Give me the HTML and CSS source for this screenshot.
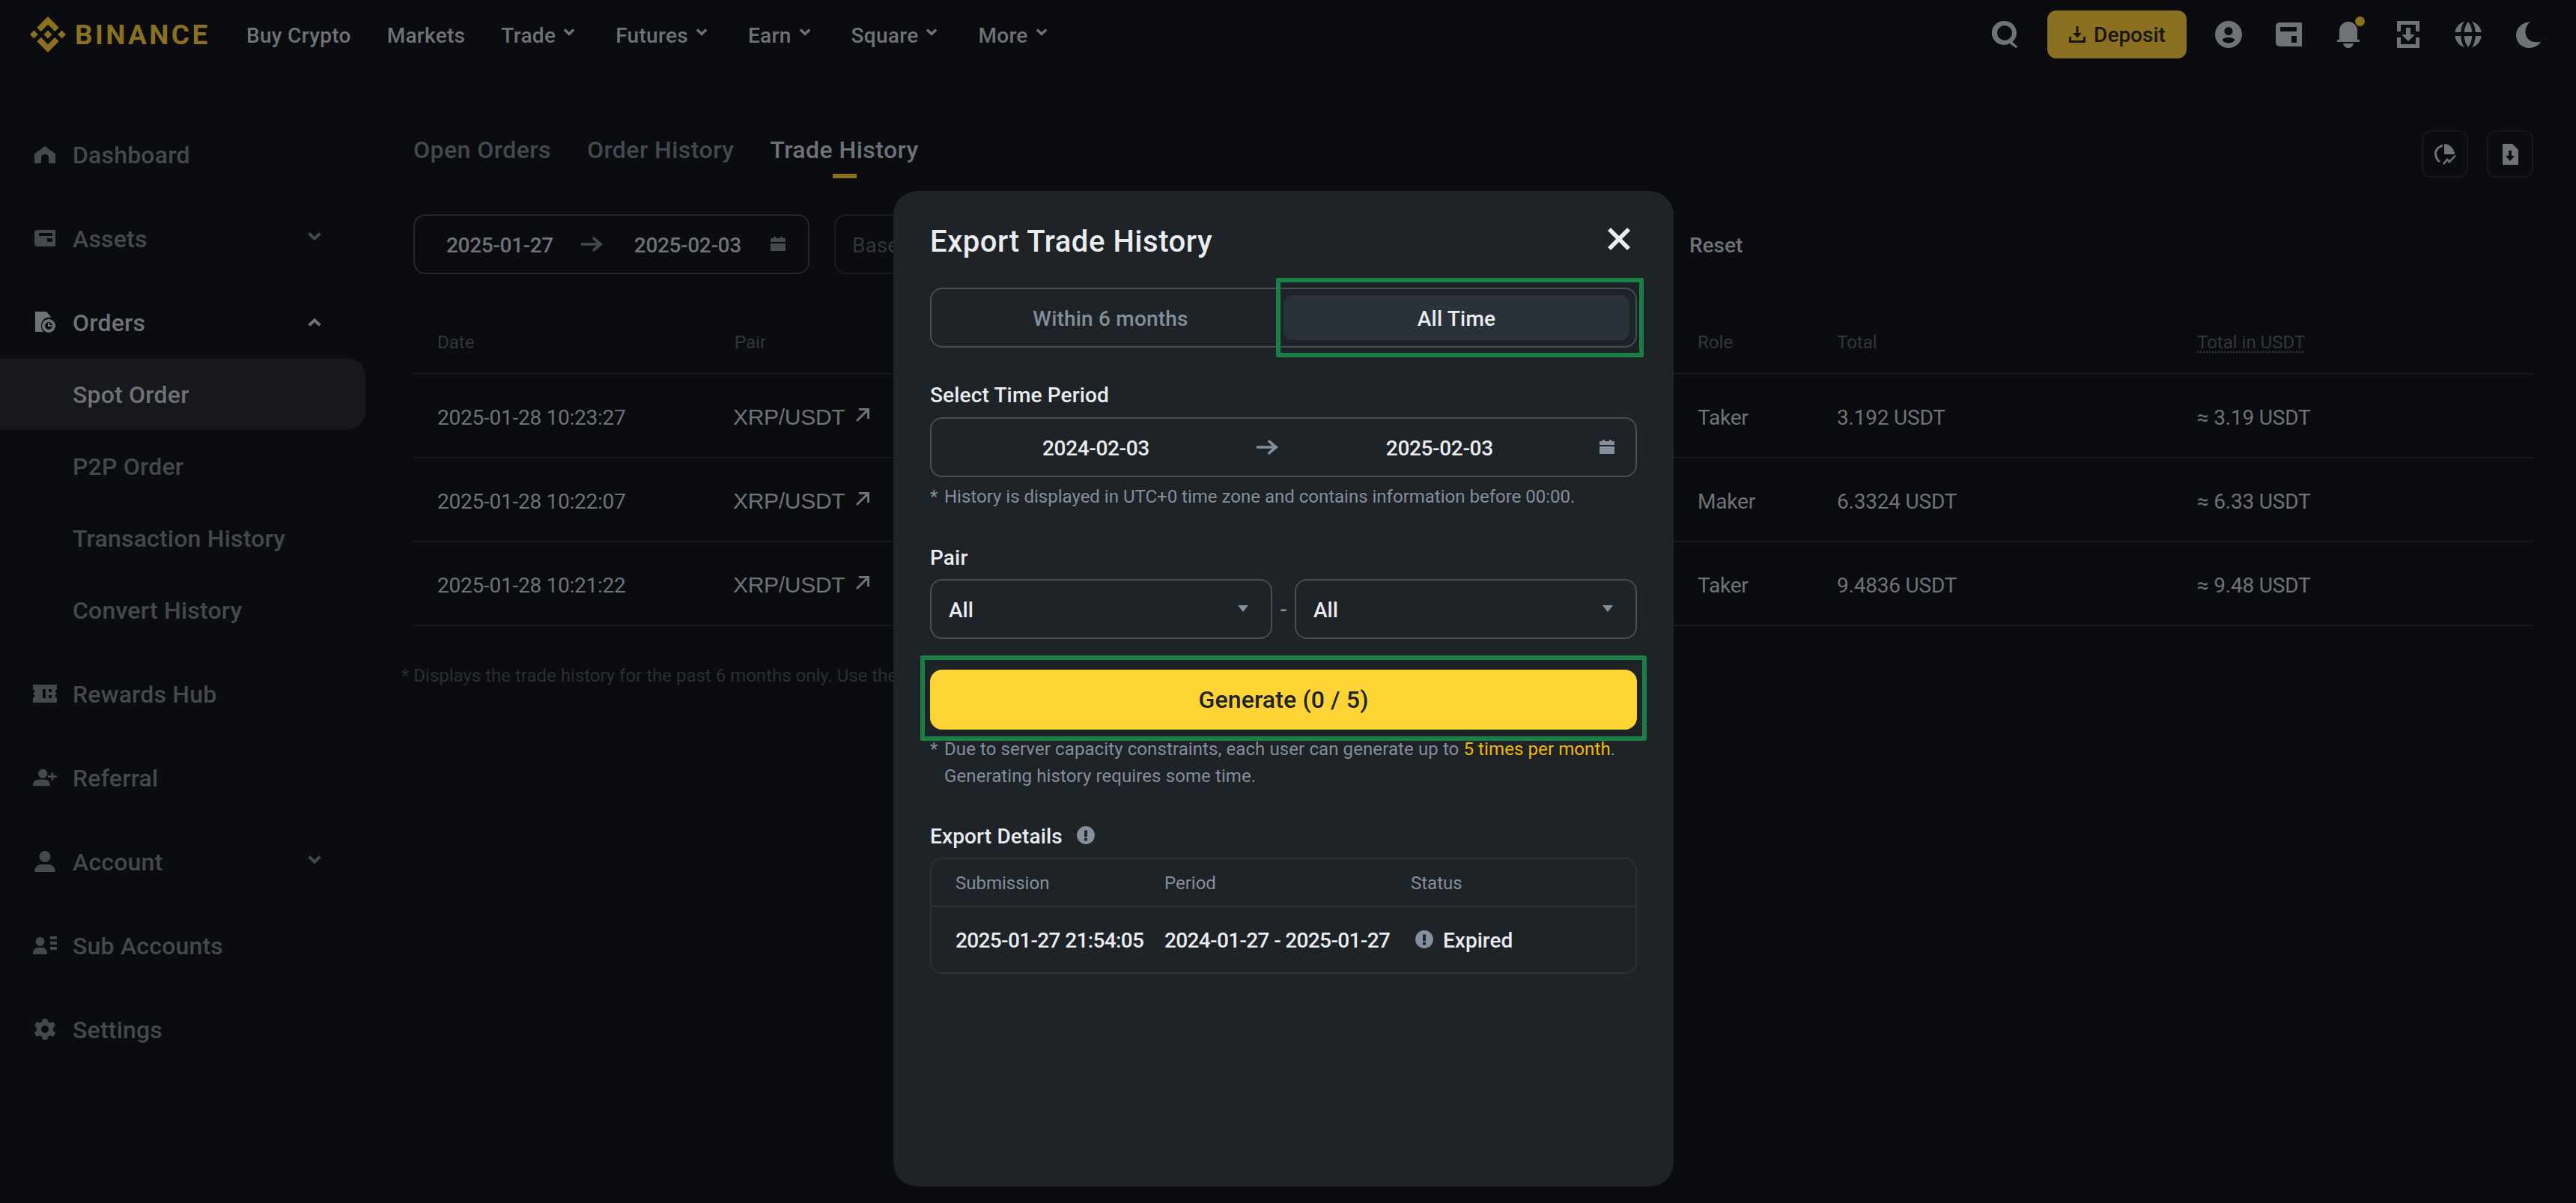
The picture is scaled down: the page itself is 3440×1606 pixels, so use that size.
FILE: index.html
```html
<!DOCTYPE html>
<html lang="en">
<head>
    <meta charset="UTF-8">
    <title>Export Trade History</title>
    <link rel="stylesheet" href="styles.css">
</head>
<body>
    <svg class="defs" width="0" height="0">
        <symbol id="chev" viewBox="0 0 24 24"><path d="M4 8.500 12 16l8-7.500-2.600-2.700L12 10.800 6.600 5.800z"/></symbol>
        <symbol id="cal" viewBox="0 0 24 24"><path d="M6 2h3v2h6V2h3v2h4v5H2V4h4zM2 11h20v10H2z"/></symbol>
        <symbol id="arrow" viewBox="0 0 32 24"><path d="M18 2l-2.400 2.300 6.200 6H1v3.400h20.800l-6.200 6L18 22l12-10z"/></symbol>
        <symbol id="info" viewBox="0 0 24 24"><path fill-rule="evenodd" d="M12 1a11 11 0 1 1 0 22 11 11 0 0 1 0-22zm-1.800 5v8h3.600V6zm0 9.500V19h3.600v-3.500z"/></symbol>
        <symbol id="ext" viewBox="0 0 20 20"><path d="M5 1h14v14h-3V6.200L3 19l-2-2L13.800 4H5z"/></symbol>
    </svg>

    <!-- Barra superior -->
    <header class="topbar">
        <a class="logo">
            <svg class="logo-mark" viewBox="0 0 24 24"><path d="M16.624 13.920l2.718 2.715-7.353 7.353-7.353-7.352 2.718-2.716 4.635 4.659 4.636-4.659zm4.637-4.637L24 12l-2.715 2.716L18.568 12l2.693-2.717zm-9.272.001l2.716 2.692-2.716 2.717L9.272 12l2.717-2.716zm-9.272-.001L5.409 12l-2.691 2.692L0 12l2.717-2.717zM11.989.011l7.353 7.329-2.718 2.716-4.635-4.636-4.636 4.660-2.717-2.716z"/></svg>
            <span class="logo-text">BINANCE</span>
        </a>
        <nav class="topnav">
            <a>Buy Crypto</a>
            <a>Markets</a>
            <a>Trade<svg class="nav-chev"><use href="#chev"/></svg></a>
            <a>Futures<svg class="nav-chev"><use href="#chev"/></svg></a>
            <a>Earn<svg class="nav-chev"><use href="#chev"/></svg></a>
            <a>Square<svg class="nav-chev"><use href="#chev"/></svg></a>
            <a>More<svg class="nav-chev"><use href="#chev"/></svg></a>
        </nav>
        <div class="top-actions">
            <svg class="top-icon search-icon" viewBox="0 0 36 36"><path fill-rule="evenodd" d="M17 0a16 16 0 0 1 10.500 28l7 6.500-2.500 1.500-8.500-6A16 16 0 1 1 17 0zm0 6a10 10 0 1 0 0 20 10 10 0 0 0 0-20z"/></svg>
            <button class="deposit-btn">
                <svg viewBox="0 0 24 24"><path d="M10.500 1h3v9h4.500l-6 6.500L6 10h4.500zM1 15h3v5h16v-5h3v8H1z"/></svg>
                Deposit
            </button>
            <svg class="top-icon" viewBox="0 0 36 36"><path fill-rule="evenodd" d="M18 0a18 18 0 1 1 0 36 18 18 0 0 1 0-36zm0 8a5.500 5.500 0 1 0 0 11 5.500 5.500 0 0 0 0-11zm0 14c-4.500 0-7.500 1.500-8.500 3.500 2 2.500 5 4 8.500 4s6.500-1.500 8.500-4c-1-2-4-3.500-8.500-3.500z"/></svg>
            <svg class="top-icon" viewBox="0 0 36 36"><path fill-rule="evenodd" d="M6 2h30v32H6a5 5 0 0 1-5-5V7a5 5 0 0 1 5-5zm1 6v6h22V8zm15 12v9h7v-9z"/></svg>
            <span class="bell">
                <svg class="top-icon" viewBox="0 0 36 36"><path d="M18 1c7 0 12 5 12 12v12h3v3H3v-3h3V13C6 6 11 1 18 1zM11 30h14c-1 4-4 6-7 6s-6-2-7-6z"/></svg>
                <i class="bell-dot"></i>
            </span>
            <svg class="top-icon" viewBox="0 0 36 36"><path d="M3 0h30v14h-5V5H8v9H3zM15 9h6v9h6l-9 9-9-9h6zM3 22h5v9h20v-9h5v14H3z"/></svg>
            <svg class="top-icon" viewBox="0 0 36 36"><path fill-rule="evenodd" d="M13.500.6C10 4 8.500 9.500 8.300 15H.2a18 18 0 0 1 13.300-14.400zm9 0A18 18 0 0 1 35.800 15h-8.100C27.500 9.500 26 4 22.500.6zM18 1c3 3.500 5 8.500 5.300 14H12.700C13 9.500 15 4.500 18 1zM.2 20h8.100c.2 5.500 1.700 11.800 5.200 15.400A18 18 0 0 1 .2 20zm12.500 0h10.600c-.3 5.500-2.300 11.500-5.300 15-3-3.500-5-9.500-5.300-15zm15 0h8.100a18 18 0 0 1-13.300 15.400c3.500-3.600 5-9.900 5.200-15.400z"/></svg>
            <svg class="top-icon" viewBox="0 0 36 36"><path d="M21 1C14 7 13 15 16 21c3 6 10 8.500 19 6.500C32 33 26 36 19 36 9 36 2 28 2 19 2 9 10 2 21 1z"/></svg>
        </div>
    </header>

    <div class="page">
        <!-- Menu lateral -->
        <aside class="sidebar">
            <a class="side-item">
                <svg class="side-icon" viewBox="0 0 28 24"><path d="M14 1l14 10.500V24h-9v-8c0-2-2-4-5-4s-5 2-5 4v8H0V11.500z"/></svg>
                Dashboard
            </a>
            <a class="side-item">
                <svg class="side-icon" viewBox="0 0 28 24"><path fill-rule="evenodd" d="M4 1h24v22H4a4 4 0 0 1-4-4V5a4 4 0 0 1 4-4zm2 4v4h18V5zm11 7v5h7v-5z"/></svg>
                Assets
                <svg class="side-chev"><use href="#chev"/></svg>
            </a>
            <a class="side-item side-open">
                <svg class="side-icon" viewBox="0 0 28 28"><path d="M1 0h15l6 7v1c-8-1-13 4-13 11 0 3 1 6 3 8H1zM19 10a9 9 0 1 1 0 18 9 9 0 0 1 0-18zm0 4a5 5 0 1 0 0 10 5 5 0 0 0 0-10zm-1 1h2v3h3v2h-5z"/></svg>
                Orders
                <svg class="side-chev flip"><use href="#chev"/></svg>
            </a>
            <div class="side-sub">
                <a class="sub-item active">Spot Order</a>
                <a class="sub-item">P2P Order</a>
                <a class="sub-item">Transaction History</a>
                <a class="sub-item">Convert History</a>
            </div>
            <a class="side-item">
                <svg class="side-icon wide" viewBox="0 0 32 24"><path d="M0 0h32v6l-3 3 3 3v-3 3l-3 3 3 3v6H0v-6l3-3-3-3 3-3-3-3zm13 6v12h4V6zm8 0v4h4V6zm0 8v4h4v-4z"/></svg>
                Rewards Hub
            </a>
            <a class="side-item">
                <svg class="side-icon wide" viewBox="0 0 34 24"><path d="M14 0a6.500 6.500 0 1 1 0 13 6.500 6.500 0 0 1 0-13zM12 15h4c6 0 8 3 8 9H0c0-6 3-9 8-9zM26 5h3v4h5v3h-5v4h-3v-4h-5V9h5z"/></svg>
                Referral
            </a>
            <a class="side-item">
                <svg class="side-icon" viewBox="0 0 28 28"><path d="M14 0a7.500 7.500 0 1 1 0 15 7.500 7.500 0 0 1 0-15zM10 18h8c6 0 10 4 10 10H0c0-6 4-10 10-10z"/></svg>
                Account
                <svg class="side-chev"><use href="#chev"/></svg>
            </a>
            <a class="side-item">
                <svg class="side-icon wide" viewBox="0 0 32 24"><path d="M9.500 1a6 6 0 1 1 0 12 6 6 0 0 1 0-12zM7 15h5c5 0 7 4 7 9H0c0-5 2-9 7-9zM23 0h9v4h-9zM23 7h9v4h-9zM23 14h9v4h-9z"/></svg>
                Sub Accounts
            </a>
            <a class="side-item">
                <svg class="side-icon wide" viewBox="0 0 30 28"><path fill-rule="evenodd" d="M12 0h6l1 4 3 1.500 4-1.500 3 5-3 3v4l3 3-3 5-4-1.500-3 1.500-1 4h-6l-1-4-3-1.500-4 1.500-3-5 3-3v-4L1 9l3-5 4 1.500L11 4zm3 9a5 5 0 1 0 0 10 5 5 0 0 0 0-10z"/></svg>
                Settings
            </a>
        </aside>

        <!-- Conteúdo principal -->
        <main class="content">
            <div class="tabs-row">
                <div class="tabs">
                    <a class="tab">Open Orders</a>
                    <a class="tab">Order History</a>
                    <a class="tab active">Trade History</a>
                </div>
                <div class="tools">
                    <button class="tool-btn"><svg viewBox="0 0 30 30"><path fill-rule="evenodd" d="M14 1v14h14C28 8 21 1 14 1zM12 2C6 3 1 8 1 14c0 5 2 9 6 12l2-2C6 22 4 18 4 14c0-4 3-8 8-9zM28 16l-7 7-3-3-6 7 2 2 4-5 3 3 9-10z"/></svg></button>
                    <button class="tool-btn"><svg viewBox="0 0 30 30"><path fill-rule="evenodd" d="M5 1h13l8 8v20H5zm8 9v7H9l6 7 6-7h-4v-7z"/></svg></button>
                </div>
            </div>

            <div class="filters">
                <div class="range">
                    <span class="range-date">2025-01-27</span>
                    <svg class="range-arrow"><use href="#arrow"/></svg>
                    <span class="range-date second">2025-02-03</span>
                    <svg class="range-cal"><use href="#cal"/></svg>
                </div>
                <div class="base-input">Base</div>
                <a class="reset">Reset</a>
            </div>

            <div class="trades">
                <div class="trade-row trade-head">
                    <span>Date</span><span>Pair</span><span>Role</span><span>Total</span><span><u>Total in USDT</u></span>
                </div>
                <div class="trade-row">
                    <span class="stamp">2025-01-28 10:23:27</span>
                    <span class="pair">XRP/USDT<svg><use href="#ext"/></svg></span>
                    <span>Taker</span><span>3.192 USDT</span><span>≈ 3.19 USDT</span>
                </div>
                <div class="trade-row">
                    <span class="stamp">2025-01-28 10:22:07</span>
                    <span class="pair">XRP/USDT<svg><use href="#ext"/></svg></span>
                    <span>Maker</span><span>6.3324 USDT</span><span>≈ 6.33 USDT</span>
                </div>
                <div class="trade-row">
                    <span class="stamp">2025-01-28 10:21:22</span>
                    <span class="pair">XRP/USDT<svg><use href="#ext"/></svg></span>
                    <span>Taker</span><span>9.4836 USDT</span><span>≈ 9.48 USDT</span>
                </div>
            </div>
            <p class="foot-note">* Displays the trade history for the past 6 months only. Use the export function for older records.</p>
        </main>
    </div>

    <!-- Modal de exportação -->
    <section class="modal">
        <div class="modal-head">
            <h2>Export Trade History</h2>
            <svg class="close" viewBox="0 0 30 30"><path d="M4 0l11 11L26 0l4 4-11 11 11 11-4 4-11-11L4 30l-4-4 11-11L0 4z"/></svg>
        </div>

        <div class="segment">
            <button class="seg-btn">Within 6 months</button>
            <button class="seg-btn active">All Time</button>
            <i class="mark mark-seg"></i>
        </div>

        <div class="field-label label-period">Select Time Period</div>
        <div class="range range-modal">
            <span class="range-date">2024-02-03</span>
            <svg class="range-arrow"><use href="#arrow"/></svg>
            <span class="range-date second">2025-02-03</span>
            <svg class="range-cal"><use href="#cal"/></svg>
        </div>
        <p class="hint hint-period"><span class="star">*</span><span>History is displayed in UTC+0 time zone and contains information before 00:00.</span></p>

        <div class="field-label label-pair">Pair</div>
        <div class="pair-selects">
            <div class="select">All<i class="caret"></i></div>
            <span class="dash">-</span>
            <div class="select">All<i class="caret"></i></div>
        </div>

        <div class="generate-wrap">
            <button class="generate">Generate (0 / 5)</button>
            <i class="mark mark-gen"></i>
        </div>
        <p class="hint hint-limit"><span class="star">*</span><span>Due to server capacity constraints, each user can generate up to <em>5 times per month</em>.<br>Generating history requires some time.</span></p>

        <div class="field-label label-details">Export Details<svg class="info"><use href="#info"/></svg></div>
        <div class="details">
            <div class="details-row details-head">
                <span>Submission</span><span>Period</span><span>Status</span>
            </div>
            <div class="details-row details-body">
                <span>2025-01-27 21:54:05</span>
                <span>2024-01-27 - 2025-01-27</span>
                <span class="status"><svg class="info"><use href="#info"/></svg>Expired</span>
            </div>
        </div>
    </section>
</body>
</html>
```

FILE: styles.css
```css
* { box-sizing: border-box; }
html, body { margin: 0; padding: 0; }
body {
    width: 3440px;
    height: 1606px;
    overflow: hidden;
    position: relative;
    background: #0a0c10;
    color: #6f7277;
    font-family: Roboto, "Noto Sans", sans-serif;
    font-size: 28px;
}
svg { fill: currentColor; flex: none; }
.defs { position: absolute; }
button { font-family: inherit; border: 0; padding: 0; }
p, h2 { margin: 0; }

/* Barra superior */
.topbar { height: 96px; display: flex; align-items: center; padding: 0 46px 4px 40px; }
.logo { display: flex; align-items: center; gap: 12px; color: #8a7020; width: 289px; }
.logo-mark { width: 48px; height: 48px; }
.logo-text { font-size: 37px; font-weight: 700; letter-spacing: 3.400px; }
.topnav { display: flex; gap: 48px; font-weight: 500; letter-spacing: .3px; }
.topnav a { display: flex; align-items: center; gap: 7px; padding-top: 2px; }
.nav-chev { width: 22px; height: 22px; margin: -6px 3px 0 0; }
.topnav a:last-child .nav-chev { margin-right: 0; }
.top-actions { margin-left: auto; display: flex; align-items: center; gap: 44px; }
.top-icon { width: 36px; height: 36px; display: block; }
.search-icon { margin-right: -6px; }
.deposit-btn {
    width: 186px; height: 64px; margin-right: -6px;
    display: flex; align-items: center; justify-content: center; gap: 10px;
    background: #8a7020; color: #17150f; border-radius: 12px;
    font-size: 28px; font-weight: 500;
}
.deposit-btn svg { width: 24px; height: 24px; }
.bell { position: relative; display: block; }
.bell-dot { position: absolute; right: -4px; top: -6px; width: 13px; height: 13px; border-radius: 50%; background: #8a7020; }

/* Menu lateral */
.page { display: flex; }
.sidebar { width: 488px; flex: none; padding-top: 62px; color: #44484f; font-size: 32px; font-weight: 500; letter-spacing: .2px; }
.side-item { height: 96px; margin-bottom: 16px; display: flex; align-items: center; padding: 2px 55px 0 97px; position: relative; }
.side-open { color: #6f7277; margin-bottom: 0; }
.side-icon { position: absolute; left: 46px; top: 34px; width: 28px; height: 28px; }
.side-icon.wide { left: 44px; width: 32px; }
.side-chev { width: 26px; height: 26px; margin: -4px 0 0 auto; }
.side-chev.flip { transform: rotate(180deg); }
.side-sub { margin-bottom: 16px; }
.sub-item { height: 96px; display: flex; align-items: center; padding: 2px 0 0 97px; }
.sub-item.active { background: #16181c; color: #6f7277; border-radius: 0 24px 24px 0; }

/* Conteúdo principal */
.content { flex: 1; padding: 0 57px 0 64px; }
.tabs-row { display: flex; justify-content: space-between; padding-top: 78px; height: 190px; }
.tabs { display: flex; gap: 48px; font-size: 32px; font-weight: 500; color: #44484f; height: 56px; letter-spacing: .45px; }
.tab { position: relative; line-height: 52px; }
.tab.active { color: #6f7277; }
.tab.active::after { content: ""; position: absolute; left: 50%; bottom: -8px; width: 32px; height: 6px; margin-left: -16px; background: #8a7020; }
.tools { display: flex; gap: 25px; }
.tool-btn { width: 62px; height: 63px; background: none; border: 2px solid #15171b; border-radius: 12px; color: #6f7277; display: flex; align-items: center; justify-content: center; }
.tool-btn svg { width: 30px; height: 30px; }

.filters { display: flex; align-items: center; height: 80px; }
.range { width: 529px; height: 80px; border: 2px solid #25282d; border-radius: 16px; display: flex; align-items: center; padding: 0 28px 0 42px; color: #6f7277; font-weight: 500; }
.range-date { letter-spacing: -.35px; padding-top: 2px; }
.range-arrow { width: 32px; height: 24px; margin-left: 36px; color: #44484f; }
.range-date.second { margin-left: 40px; }
.range-cal { width: 24px; height: 24px; margin-left: auto; color: #44484f; }
.base-input { width: 480px; height: 80px; margin-left: 33px; border: 2px solid #191b20; border-radius: 16px 0 0 16px; display: flex; align-items: center; padding: 2px 0 0 22px; color: #33363c; }
.reset { margin-left: 662px; padding-top: 2px; font-weight: 500; }

.trades { margin-top: 50px; }
.trade-row { height: 112px; display: grid; grid-template-columns: 397px 1286px 186px 481px 1fr; align-items: center; padding: 4px 0 0 32px; border-bottom: 2px solid #16181c; letter-spacing: -.2px; }
.trade-head { height: 84px; padding-top: 0; font-size: 24px; color: #33363c; letter-spacing: 0; }
.trade-head u { text-decoration: underline dotted; text-underline-offset: 4px; }
.stamp { letter-spacing: -.25px; }
.pair { font-family: "Liberation Sans", sans-serif; font-size: 30px; letter-spacing: -.3px; display: flex; align-items: center; gap: 14px; margin-left: -2px; }
.pair svg { width: 20px; height: 20px; margin-top: -6px; }
.foot-note { margin: 52px 0 0 -16px; font-size: 24px; color: #2b2e33; white-space: nowrap; }

/* Modal de exportação */
.modal {
    position: absolute; left: 1193px; top: 255px; width: 1042px; height: 1329px;
    padding: 0 49px;
    background: #1e2328; border-radius: 32px;
    color: #eaecef; font-weight: 500;
}
.modal-head { height: 129px; display: flex; align-items: center; justify-content: space-between; padding-right: 9px; }
.modal-head h2 { font-size: 40px; font-weight: 500; letter-spacing: .55px; padding-top: 6px; }
.close { width: 30px; height: 30px; margin-top: -2px; color: #eaecef; }

.segment { position: relative; height: 80px; border: 2px solid #474d57; border-radius: 16px; display: flex; padding: 8px; }
.seg-btn { flex: 1; background: none; color: #848e9c; font-size: 28px; font-weight: 500; border-radius: 12px; letter-spacing: .2px; padding-top: 2px; }
.seg-btn.active { background: #2b3139; color: #eaecef; }
.mark { position: absolute; border: 6px solid #1a7f45; border-radius: 2px; pointer-events: none; }
.mark-seg { left: 460px; top: -15px; width: 491px; height: 106px; }

.field-label { font-size: 28px; color: #eaecef; letter-spacing: .15px; }
.label-period { margin-top: 46px; line-height: 36px; }
.range-modal { width: 944px; margin-top: 11px; color: #eaecef; padding: 0 26px 0 148px; border-color: #474d57; }
.range-modal .range-arrow { margin-left: 142px; color: #848e9c; }
.range-modal .range-date.second { margin-left: 142px; }
.range-modal .range-cal { color: #848e9c; }

.hint { display: flex; font-size: 24px; line-height: 36px; color: #848e9c; font-weight: 400; }
.star { width: 19px; flex: none; }
.hint em { font-style: normal; color: #f0b90b; }
.hint-period { margin-top: 8px; }
.label-pair { margin-top: 46px; line-height: 36px; }
.pair-selects { display: flex; align-items: center; margin-top: 10px; }
.select { flex: 1; height: 80px; border: 2px solid #474d57; border-radius: 16px; display: flex; align-items: center; justify-content: space-between; padding: 2px 30px 0 23px; }
.dash { width: 30px; text-align: center; color: #848e9c; }
.caret { width: 0; height: 0; border: 7px solid transparent; border-top: 9px solid #848e9c; border-bottom: 0; margin-top: -4px; }

.generate-wrap { position: relative; margin-top: 41px; }
.generate { display: block; width: 100%; height: 80px; border-radius: 16px; background: #fed434; color: #1e2329; font-size: 32px; font-weight: 500; letter-spacing: .15px; }
.mark-gen { left: -13px; top: -19px; width: 970px; height: 114px; }
.hint-limit { margin-top: 8px; letter-spacing: .1px; }

.label-details { margin-top: 45px; line-height: 36px; display: flex; align-items: center; gap: 18px; }
.info { width: 26px; height: 26px; color: #848e9c; }
.label-details .info { margin-top: -4px; }
.details { margin-top: 10px; border: 2px solid #2b3139; border-radius: 16px; height: 155px; }
.details-row { display: grid; grid-template-columns: 279px 329px 1fr; padding-left: 32px; align-items: center; }
.details-head { height: 64px; font-size: 24px; font-weight: 400; color: #848e9c; border-bottom: 2px solid #2b3139; padding-top: 2px; }
.details-body { height: 87px; padding-top: 2px; letter-spacing: -.65px; }
.status { display: flex; align-items: center; gap: 12px; padding-left: 5px; letter-spacing: 0; }
.status .info { margin-top: -4px; }
```
